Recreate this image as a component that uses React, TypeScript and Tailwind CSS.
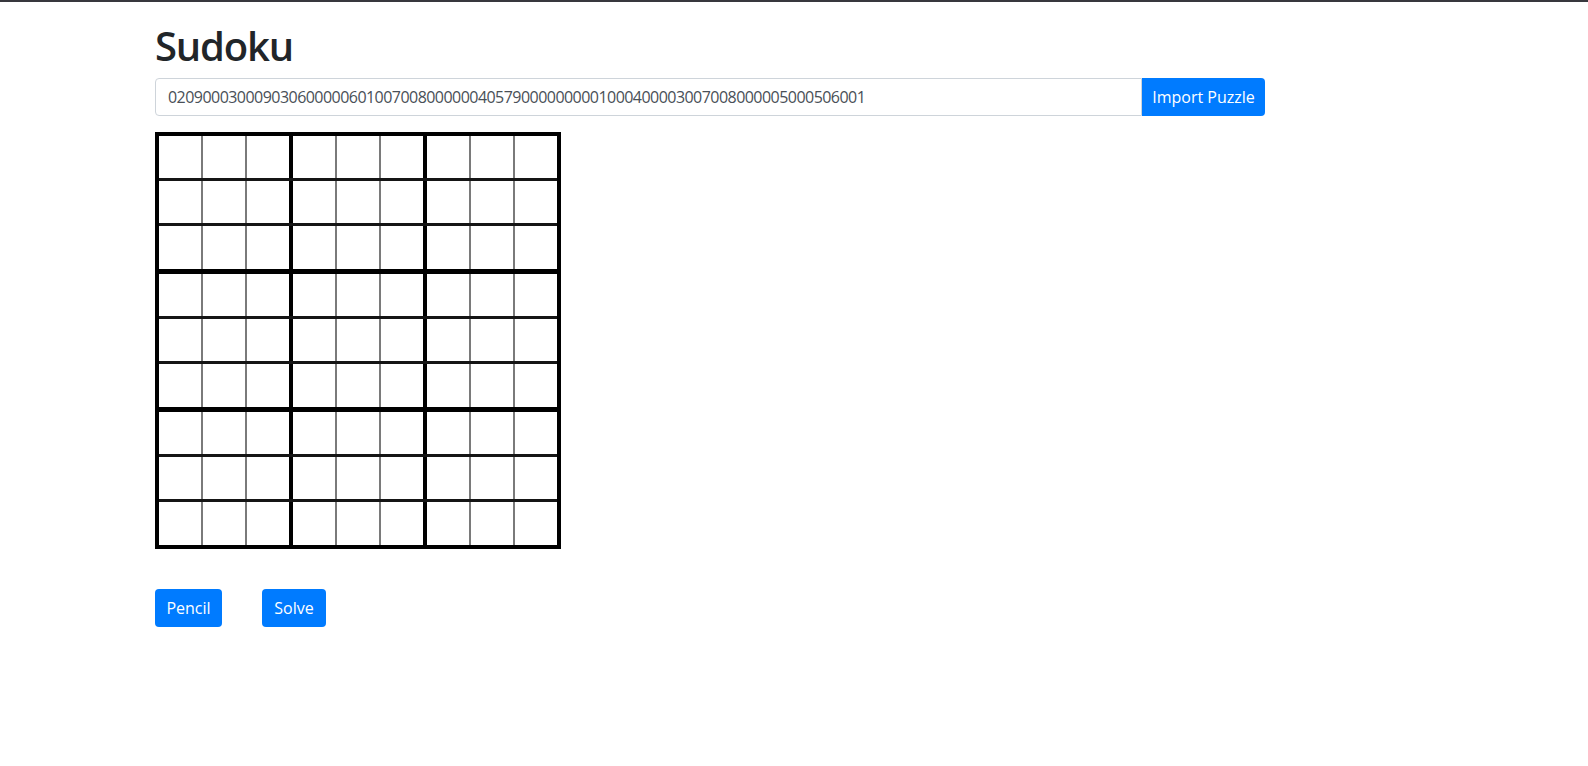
import React from 'react';

const font = { fontFamily: '"Open Sans", "Noto Sans", sans-serif' };

const puzzle =
  '020900030009030600000601007008000000405790000000001000400003007008000005000506001';

const rows = [0, 1, 2, 3, 4, 5, 6, 7, 8];

const cellClass = (r: number, c: number) => {
  const tall = r % 3 === 2;
  if (c === 0) return tall ? 'w-[42px] h-[43px] bg-white' : 'w-[42px] h-[42px] bg-white';
  if (c % 3 === 0)
    return tall
      ? 'w-[46px] h-[43px] bg-white border-l-4 border-black'
      : 'w-[46px] h-[42px] bg-white border-l-4 border-black';
  return tall
    ? 'w-[44px] h-[43px] bg-white border-l-2 border-[#7a7a7a]'
    : 'w-[44px] h-[42px] bg-white border-l-2 border-[#7a7a7a]';
};

const Board = () => (
  <div className="inline-flex flex-col border-4 border-black bg-white">
    {rows.map((r) => (
      <div
        key={r}
        className={
          r === 0
            ? 'flex'
            : r % 3 === 0
            ? 'flex border-t-[5px] border-black'
            : 'flex border-t-[3px] border-[#151515]'
        }
      >
        {rows.map((c) => (
          <div key={c} className={cellClass(r, c)} />
        ))}
      </div>
    ))}
  </div>
);

export default function App() {
  return (
    <div className="min-h-screen bg-white border-t-2 border-[#38383e]" style={font}>
      <div className="ml-[155px] w-[1110px] pt-5">
        <h1 className="text-[40px] leading-[48px] font-semibold tracking-[-1.2px] text-[#212529] mb-2">
          Sudoku
        </h1>
        <div className="flex h-[38px]">
          <input
            readOnly
            value={puzzle}
            className="flex-1 h-[38px] px-3 border border-[#ced4da] rounded-l text-[16px] tracking-[-0.54px] text-[#495057] outline-none"
            style={font}
          />
          <button className="w-[123px] h-[38px] bg-[#007bff] text-white text-[16px] rounded-r">
            Import Puzzle
          </button>
        </div>
        <div className="mt-4">
          <Board />
        </div>
        <div className="flex gap-10 mt-[40px]">
          <button className="w-[67px] h-[38px] bg-[#007bff] text-white text-[16px] rounded">Pencil</button>
          <button className="w-[64px] h-[38px] bg-[#007bff] text-white text-[16px] rounded">Solve</button>
        </div>
      </div>
    </div>
  );
}
